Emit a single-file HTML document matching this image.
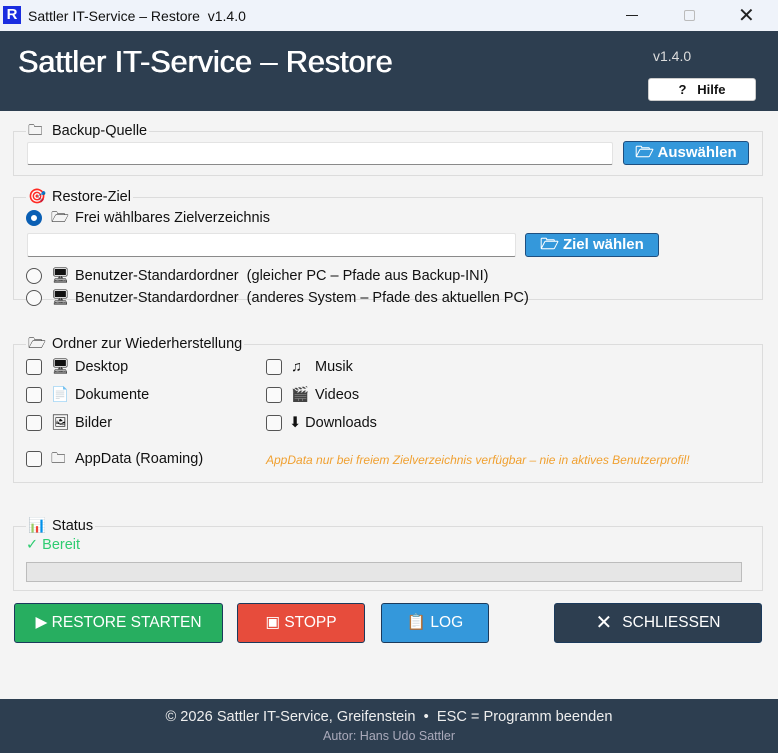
<!DOCTYPE html>
<html><head><meta charset="utf-8"><style>
*{box-sizing:border-box;margin:0;padding:0}
body{width:778px;height:753px;overflow:hidden;background:#f4f4f4;font-family:"Liberation Sans","DejaVu Sans",sans-serif;font-size:14.5px;color:#111;position:relative}
.a{position:absolute}
.tb{left:0;top:0;width:778px;height:31px;background:#eff3fa}
.hdr{left:0;top:31px;width:778px;height:80px;background:#2d3e50}
.grp{border:1px solid #dcdcdc;position:absolute}
.leg{position:absolute;background:#f4f4f4;padding:0 2px;font-size:14.5px;white-space:nowrap;line-height:18px}
.inp{position:absolute;background:#fff;border:1px solid #e3e3e3;border-bottom:1px solid #8a8a8a;border-radius:2px}
.bb{position:absolute;background:#3498db;border:1px solid #1e4f80;border-radius:3px;color:#fff;font-weight:bold;font-size:15px;display:flex;align-items:center;justify-content:center;gap:6px;line-height:18px}
.cb{position:absolute;width:16px;height:16px;border:1px solid #555;border-radius:3px;background:#fafafa}
.rd{position:absolute;width:16px;height:16px;border:1px solid #555;border-radius:50%;background:#fafafa}
.lbl{position:absolute;font-size:14.5px;white-space:nowrap;line-height:18px;height:18px}
.ic{display:inline-block;width:24px;height:18px;line-height:18px;vertical-align:top;overflow:hidden}
.btn{position:absolute;top:603px;height:40px;border:1px solid #1b3a5c;border-radius:3px;color:#fff;font-size:15.5px;display:flex;align-items:center;justify-content:center;gap:10px;line-height:20px}
</style></head><body>
<div class="a tb"></div>
<div class="a" style="left:3px;top:6px;width:18px;height:18px;background:#1a2de0;color:#fff;font-weight:bold;font-size:15px;line-height:18px;text-align:center">R</div>
<div class="a" style="left:28px;top:8px;font-size:14px">Sattler IT-Service – Restore&nbsp; v1.4.0</div>
<div class="a" style="left:626px;top:15px;width:12px;height:1px;background:#222"></div>
<div class="a" style="left:684px;top:10px;width:11px;height:11px;border:1px solid #bbb;border-radius:2px"></div>
<div class="a" style="left:738px;top:3px;font-size:20px;color:#222">✕</div>
<div class="a hdr"></div>
<div class="a" style="left:18px;top:45px;color:#fff;font-size:30.5px;font-weight:normal;text-shadow:0.5px 0 0 #fff,-0.3px 0 0 #fff">Sattler IT-Service – Restore</div>
<div class="a" style="left:653px;top:48px;color:#ddd;font-size:14px">v1.4.0</div>
<div class="a" style="left:648px;top:78px;width:108px;height:23px;background:#fff;border:1px solid #ccc;border-radius:3px;font-weight:bold;font-size:13px;text-align:center;line-height:21px">?&nbsp;&nbsp; Hilfe</div>

<div class="grp" style="left:13px;top:131px;width:750px;height:45px"></div>
<div class="leg" style="left:26px;top:122px"><span class="ic">🗀</span>Backup-Quelle</div>
<div class="inp" style="left:27px;top:142px;width:586px;height:23px"></div>
<div class="bb" style="left:623px;top:141px;width:126px;height:24px">🗁 Auswählen</div>

<div class="grp" style="left:13px;top:197px;width:750px;height:103px"></div>
<div class="leg" style="left:26px;top:188px"><span class="ic">🎯</span>Restore-Ziel</div>
<div class="rd" style="left:26px;top:210px;border:5px solid #0a5fb4;background:#fff"></div>
<div class="lbl" style="left:51px;top:209px"><span class="ic">🗁</span>Frei wählbares Zielverzeichnis</div>
<div class="inp" style="left:27px;top:233px;width:489px;height:24px"></div>
<div class="bb" style="left:525px;top:233px;width:134px;height:24px">🗁 Ziel wählen</div>
<div class="rd" style="left:26px;top:268px"></div>
<div class="lbl" style="left:51px;top:267px"><span class="ic">🖥</span>Benutzer-Standardordner&nbsp; (gleicher PC – Pfade aus Backup-INI)</div>
<div class="rd" style="left:26px;top:290px"></div>
<div class="lbl" style="left:51px;top:289px"><span class="ic">🖥</span>Benutzer-Standardordner&nbsp; (anderes System – Pfade des aktuellen PC)</div>

<div class="grp" style="left:13px;top:344px;width:750px;height:139px"></div>
<div class="leg" style="left:26px;top:335px"><span class="ic">🗁</span>Ordner zur Wiederherstellung</div>
<div class="cb" style="left:26px;top:359px"></div><div class="lbl" style="left:51px;top:358px"><span class="ic">🖥</span>Desktop</div>
<div class="cb" style="left:26px;top:387px"></div><div class="lbl" style="left:51px;top:386px"><span class="ic">📄</span>Dokumente</div>
<div class="cb" style="left:26px;top:415px"></div><div class="lbl" style="left:51px;top:414px"><span class="ic">🖼</span>Bilder</div>
<div class="cb" style="left:26px;top:451px"></div><div class="lbl" style="left:51px;top:450px"><span class="ic">🗀</span>AppData (Roaming)</div>
<div class="cb" style="left:266px;top:359px"></div><div class="lbl" style="left:291px;top:358px"><span class="ic">♫</span>Musik</div>
<div class="cb" style="left:266px;top:387px"></div><div class="lbl" style="left:291px;top:386px"><span class="ic">🎬</span>Videos</div>
<div class="cb" style="left:266px;top:415px"></div><div class="lbl" style="left:289px;top:414px">⬇ Downloads</div>
<div class="lbl" style="left:266px;top:451px;color:#f0a030;font-style:italic;font-size:12px">AppData nur bei freiem Zielverzeichnis verfügbar – nie in aktives Benutzerprofil!</div>

<div class="grp" style="left:13px;top:526px;width:750px;height:65px"></div>
<div class="leg" style="left:26px;top:517px"><span class="ic">📊</span>Status</div>
<div class="lbl" style="left:26px;top:536px;color:#2ecc71">✓ Bereit</div>
<div class="a" style="left:26px;top:562px;width:716px;height:20px;background:#e6e6e6;border:1px solid #bcbcbc"></div>

<div class="btn" style="left:14px;width:209px;background:#27ae60">▶&nbsp;RESTORE STARTEN</div>
<div class="btn" style="left:237px;width:128px;background:#e74c3c">▣ STOPP</div>
<div class="btn" style="left:381px;width:108px;background:#3498db">📋 LOG</div>
<div class="btn" style="left:554px;width:208px;background:#2d3e50"><b style="font-size:20px">✕</b> SCHLIESSEN</div>

<div class="a" style="left:0;top:699px;width:778px;height:54px;background:#2d3e50"></div>
<div class="a" style="left:0;top:709px;width:778px;text-align:center;color:#eee;font-size:14.6px">© 2026 Sattler IT-Service, Greifenstein&nbsp; •&nbsp; ESC = Programm beenden</div>
<div class="a" style="left:0;top:729px;width:778px;text-align:center;color:#aab;font-size:12.5px">Autor: Hans Udo Sattler</div>
</body></html>
